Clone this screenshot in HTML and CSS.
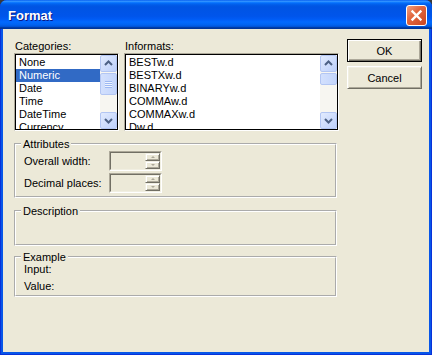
FILE: index.html
```html
<!DOCTYPE html>
<html>
  <head>
    <title>Format</title>
    <link rel="stylesheet" href="styles.css">
  </head>
  <body>
    <div class="window">
      <div class="titlebar">
        <span class="title">Format</span>
        <div class="close-btn">
          <svg width="19" height="19" viewBox="0 0 19 19">
            <path d="M5.5 5.5 L13.5 13.5 M13.5 5.5 L5.5 13.5" stroke="#fff" stroke-width="2.4" stroke-linecap="square" fill="none"></path>
          </svg>
        </div>
      </div>

      <div class="client">
        <div class="main">
          <div class="lists">
            <div class="list-group categories">
              <div class="list-label">Categories:</div>
              <div class="listbox">
                <div class="listbox-inner">
                  <ul class="items">
                    <li>None</li>
                    <li class="selected">Numeric</li>
                    <li>Date</li>
                    <li>Time</li>
                    <li>DateTime</li>
                    <li>Currency</li>
                  </ul>
                  <div class="scrollbar">
                    <div class="sb-btn">
                      <svg width="15" height="15" viewBox="0 0 15 15"><path d="M4 9 L7.5 5.5 L11 9"></path></svg>
                    </div>
                    <div class="sb-track">
                      <div class="sb-thumb thumb-cat"><span class="grip"></span></div>
                    </div>
                    <div class="sb-btn">
                      <svg width="15" height="15" viewBox="0 0 15 15"><path d="M4 6 L7.5 9.5 L11 6"></path></svg>
                    </div>
                  </div>
                </div>
              </div>
            </div>

            <div class="list-group informats">
              <div class="list-label">Informats:</div>
              <div class="listbox">
                <div class="listbox-inner">
                  <ul class="items">
                    <li>BESTw.d</li>
                    <li>BESTXw.d</li>
                    <li>BINARYw.d</li>
                    <li>COMMAw.d</li>
                    <li>COMMAXw.d</li>
                    <li>Dw.d</li>
                  </ul>
                  <div class="scrollbar">
                    <div class="sb-btn">
                      <svg width="15" height="15" viewBox="0 0 15 15"><path d="M4 9 L7.5 5.5 L11 9"></path></svg>
                    </div>
                    <div class="sb-track">
                      <div class="sb-thumb thumb-inf"></div>
                    </div>
                    <div class="sb-btn">
                      <svg width="15" height="15" viewBox="0 0 15 15"><path d="M4 6 L7.5 9.5 L11 6"></path></svg>
                    </div>
                  </div>
                </div>
              </div>
            </div>
          </div>

          <fieldset class="group attributes">
            <legend>Attributes</legend>
            <div class="group-body">
              <div class="field-row">
                <span class="field-label">Overall width:</span>
                <div class="spin-edit">
                  <div class="spin-inner">
                    <div class="spin">
                      <div class="spin-btn up"></div>
                      <div class="spin-btn down"></div>
                    </div>
                  </div>
                </div>
              </div>
              <div class="field-row">
                <span class="field-label">Decimal places:</span>
                <div class="spin-edit">
                  <div class="spin-inner">
                    <div class="spin">
                      <div class="spin-btn up"></div>
                      <div class="spin-btn down"></div>
                    </div>
                  </div>
                </div>
              </div>
            </div>
          </fieldset>

          <fieldset class="group description">
            <legend>Description</legend>
            <div class="group-body"></div>
          </fieldset>

          <fieldset class="group example">
            <legend>Example</legend>
            <div class="group-body">
              <div class="example-row">Input:</div>
              <div class="example-row">Value:</div>
            </div>
          </fieldset>
        </div>

        <div class="actions">
          <button class="btn default">OK</button>
          <button class="btn">Cancel</button>
        </div>
      </div>
    </div>
  </body>
</html>
```

FILE: styles.css
```css
* {
  box-sizing: border-box;
}
html,
body {
  margin: 0;
  padding: 0;
}
body {
  background-color: #3a3a3a;
  font-family: "Liberation Sans", Arial, sans-serif;
  font-size: 11px;
  color: #000;
}
.window {
  width: 432px;
  height: 355px;
  display: flex;
  flex-direction: column;
  background-color: #0756e8;
  border-radius: 7px 7px 0 0;
  overflow: hidden;
  box-shadow: inset 1px 0 #0831d9, inset -1px 0 #0831d9, inset 0 -1px #0831d9;
}
.titlebar {
  height: 29px;
  flex-shrink: 0;
  display: flex;
  align-items: center;
  justify-content: space-between;
  padding: 2px 5px 0 8px;
  background: linear-gradient(
    to bottom,
    #0058ee 0%,
    #3593ff 4%,
    #288eff 6%,
    #127dff 8%,
    #036ffc 10%,
    #0262ee 14%,
    #0057e5 20%,
    #0054e3 24%,
    #0055eb 56%,
    #005bf5 66%,
    #026afe 76%,
    #0062ef 86%,
    #0052d6 92%,
    #0040ab 94%,
    #003092 100%
  );
}
.title {
  color: #fff;
  font-weight: bold;
  font-size: 13px;
  text-shadow: 1px 1px #0a1883;
}
.close-btn {
  width: 21px;
  height: 21px;
  border: 1px solid #fff;
  border-radius: 3px;
  background: linear-gradient(135deg, #f0a080 0%, #e2673f 40%, #cc4520 100%);
  display: flex;
  align-items: center;
  justify-content: center;
}
.close-btn svg {
  display: block;
}
.client {
  flex: 1;
  margin: 0 3px 3px;
  background-color: #ece9d8;
  display: flex;
  gap: 8px;
  padding-left: 11px;
}
.main {
  width: 325px;
  padding-top: 11px;
}
.lists {
  display: flex;
  gap: 5px;
}
.categories {
  width: 105px;
}
.informats {
  width: 215px;
}
.list-label {
  height: 13px;
  line-height: 13px;
  padding-left: 1px;
}
.listbox {
  height: 78px;
  border: 1px solid;
  border-color: #aca899 #fff #fff #aca899;
}
.listbox-inner {
  height: 100%;
  border: 1px solid #000;
  background-color: #fff;
  display: flex;
}
.items {
  flex: 1;
  list-style: none;
  margin: 0;
  padding: 1px 0 0;
  overflow: hidden;
}
.items li {
  height: 13px;
  line-height: 13px;
  padding-left: 3px;
  white-space: nowrap;
}
.items li.selected {
  background-color: #316ac5;
  color: #fff;
}
.scrollbar {
  width: 17px;
  display: flex;
  flex-direction: column;
  background-color: #f7f6f1;
}
.sb-btn {
  height: 17px;
  flex-shrink: 0;
  border: 1px solid #b3c6f3;
  border-radius: 2px;
  background: linear-gradient(135deg, #e2ebfe, #bdd0fb);
}
.sb-btn svg {
  display: block;
}
.sb-btn path {
  fill: none;
  stroke: #4d6185;
  stroke-width: 2;
}
.sb-track {
  flex: 1;
  padding-top: 1px;
}
.sb-thumb {
  border: 1px solid #b3c6f3;
  border-radius: 2px;
  background: linear-gradient(to right, #d3e0fd, #c3d5fc);
  display: flex;
  align-items: center;
  justify-content: center;
}
.thumb-cat {
  height: 22px;
}
.thumb-inf {
  height: 12px;
}
.grip {
  width: 7px;
  height: 7px;
  background: repeating-linear-gradient(to bottom, #9db8f3 0 1px, #eef4fe 1px 2px);
}
.group {
  width: 323px;
  margin: 7px 0 0;
  padding: 0;
  border: 2px groove #fff;
  min-width: 0;
}
.group legend {
  margin-left: 5px;
  padding: 0 2px;
  line-height: 12px;
  height: 12px;
}
.attributes .group-body {
  padding: 1px 8px 3px;
  display: flex;
  flex-direction: column;
  gap: 2px;
}
.field-row {
  display: flex;
  align-items: center;
  height: 20px;
}
.field-label {
  width: 85px;
}
.spin-edit {
  width: 53px;
  height: 20px;
  border: 1px solid;
  border-color: #aca899 #fff #fff #aca899;
}
.spin-inner {
  height: 100%;
  border: 1px solid;
  border-color: #716f64 #f1efe2 #f1efe2 #716f64;
  display: flex;
  justify-content: flex-end;
}
.spin {
  width: 15px;
  display: flex;
  flex-direction: column;
}
.spin-btn {
  flex: 1;
  border: 1px solid;
  border-color: #f1efe2 #716f64 #716f64 #f1efe2;
  box-shadow: inset 1px 1px #fff, inset -1px -1px #aca899;
  display: flex;
  align-items: center;
  justify-content: center;
}
.spin-btn::after {
  content: "";
  border-left: 2px solid transparent;
  border-right: 2px solid transparent;
}
.spin-btn.up::after {
  border-bottom: 2px solid #aca899;
}
.spin-btn.down::after {
  border-top: 2px solid #aca899;
}
.description {
  margin-top: 7px;
}
.description .group-body {
  height: 27px;
}
.example {
  margin-top: 5px;
}
.example .group-body {
  padding: 0 8px 2px;
  display: flex;
  flex-direction: column;
  gap: 4px;
}
.example-row {
  line-height: 13px;
  height: 13px;
}
.actions {
  width: 75px;
  padding-top: 10px;
  display: flex;
  flex-direction: column;
  gap: 4px;
}
.btn {
  width: 75px;
  height: 23px;
  padding: 0;
  font-family: "Liberation Sans", Arial, sans-serif;
  font-size: 11px;
  color: #000;
  background-color: #ece9d8;
  border: 1px solid;
  border-color: #fff #716f64 #716f64 #fff;
  box-shadow: inset 1px 1px #f1efe2, inset -1px -1px #aca899;
}
.btn.default {
  border-color: #000;
  box-shadow: inset 1px 1px #fff, inset -1px -1px #716f64, inset -2px -2px #aca899;
}
```
